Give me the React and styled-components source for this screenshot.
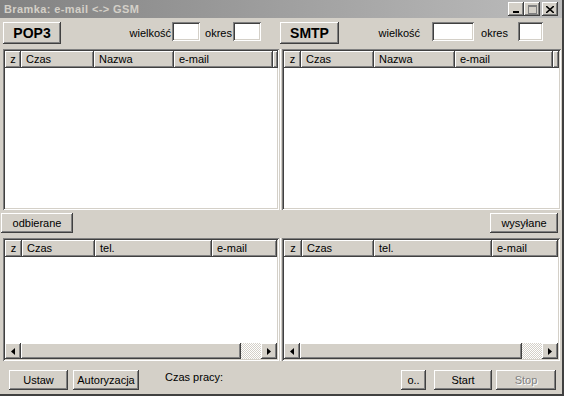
import React from 'react';
import styled, { createGlobalStyle } from 'styled-components';

const face = '#d4d0c8';
const shadow = '#808080';
const dark = '#404040';

const GlobalStyle = createGlobalStyle`
  html, body {
    margin: 0;
    padding: 0;
    background: ${face};
  }
  body {
    font-family: "Liberation Sans", Arial, sans-serif;
    font-size: 11px;
    color: #000;
  }
`;

const raised = `
  box-shadow:
    inset -1px -1px ${dark},
    inset 1px 1px #fff,
    inset -2px -2px ${shadow},
    inset 2px 2px ${face};
`;

const sunken = `
  box-shadow:
    inset 1px 1px ${shadow},
    inset -1px -1px #fff,
    inset 2px 2px ${dark},
    inset -2px -2px ${face};
`;

const Window = styled.div`
  width: 564px;
  height: 396px;
  box-sizing: border-box;
  display: flex;
  flex-direction: column;
  background: ${face};
  border-right: 2px solid ${dark};
  border-bottom: 2px solid ${dark};
  overflow: hidden;
`;

const TitleBar = styled.div`
  height: 18px;
  flex: none;
  display: flex;
  align-items: center;
  padding: 0 4px 0 4px;
  background: linear-gradient(to right, #828282, #bcbcbc);
`;

const Title = styled.div`
  flex: 1;
  font-weight: bold;
  font-size: 11px;
  letter-spacing: 0.4px;
  color: ${face};
`;

const CaptionButton = styled.div`
  width: 16px;
  height: 14px;
  box-sizing: border-box;
  background: ${face};
  ${raised}
  display: flex;
  align-items: center;
  justify-content: center;
  margin-left: ${p => p.$gap || 0}px;
`;

const Toolbar = styled.div`
  display: flex;
  height: 22px;
  margin-top: 4px;
  flex: none;
`;

const ToolbarHalf = styled.div`
  display: flex;
  align-items: center;
  width: ${p => (p.$width ? `${p.$width}px` : 'auto')};
  flex: ${p => (p.$width ? 'none' : 1)};
  box-sizing: border-box;
  padding-left: ${p => p.$padLeft}px;
  padding-right: ${p => p.$padRight}px;
`;

const Button = styled.button`
  box-sizing: border-box;
  width: ${p => p.$width}px;
  height: ${p => p.$height || 20}px;
  margin-left: ${p => p.$gap || 0}px;
  padding: 0;
  border: none;
  background: ${face};
  ${raised}
  font-family: "Liberation Sans", Arial, sans-serif;
  font-size: ${p => (p.$big ? 14 : 11)}px;
  font-weight: ${p => (p.$big ? 'bold' : 'normal')};
  color: ${p => (p.disabled ? shadow : '#000')};
  text-shadow: ${p => (p.disabled ? '1px 1px #fff' : 'none')};
  flex: none;
`;

const Label = styled.span`
  margin-left: ${p => p.$gap || 0}px;
  font-size: 11px;
  flex: none;
`;

const Spacer = styled.div`
  flex: 1;
`;

const InputBox = styled.div`
  box-sizing: border-box;
  width: ${p => p.$width}px;
  height: 19px;
  margin-left: ${p => p.$gap || 0}px;
  margin-top: -3px;
  background: #fff;
  ${sunken}
  flex: none;
`;

const Panes = styled.div`
  display: flex;
  height: ${p => p.$height}px;
  margin-top: ${p => p.$top}px;
  flex: none;
  padding-left: 3px;
`;

const Divider = styled.div`
  width: 2px;
  flex: none;
  box-sizing: border-box;
  border-right: 1px solid #fff;
  margin-right: 1px;
`;

const ListBox = styled.div`
  width: ${p => p.$width}px;
  flex: none;
  box-sizing: border-box;
  padding: 2px;
  background: #fff;
  ${sunken}
  display: flex;
  flex-direction: column;
`;

const HeaderRow = styled.div`
  display: flex;
  height: 17px;
  flex: none;
`;

const HeaderCell = styled.div`
  box-sizing: border-box;
  width: ${p => (p.$width ? `${p.$width}px` : 'auto')};
  flex: ${p => (p.$width ? 'none' : 1)};
  background: ${face};
  ${raised}
  padding-left: ${p => (p.$center ? 0 : 5)}px;
  text-align: ${p => (p.$center ? 'center' : 'left')};
  line-height: 17px;
  white-space: nowrap;
  overflow: hidden;
`;

const ListBody = styled.div`
  flex: 1;
  background: #fff;
`;

const ScrollBar = styled.div`
  display: flex;
  height: 16px;
  flex: none;
`;

const ArrowButton = styled.div`
  width: 16px;
  height: 16px;
  flex: none;
  box-sizing: border-box;
  background: ${face};
  ${raised}
  display: flex;
  align-items: center;
  justify-content: center;
`;

const Thumb = styled.div`
  flex: 1;
  background: ${face};
  ${raised}
`;

const Track = styled.div`
  width: 20px;
  flex: none;
  background: repeating-conic-gradient(#fff 0 25%, ${face} 0 50%) 0 0 / 2px 2px;
`;

const ButtonRow = styled.div`
  display: flex;
  align-items: center;
  height: 20px;
  flex: none;
  margin-top: ${p => p.$top}px;
  padding-left: ${p => p.$padLeft}px;
  padding-right: ${p => p.$padRight}px;
`;

const StatusLabel = styled.span`
  margin-left: ${p => p.$gap}px;
  align-self: flex-start;
  margin-top: 1px;
  font-size: 11px;
`;

const Arrow = ({ dir }) => (
  <svg width="4" height="7" viewBox="0 0 4 7">
    {dir === 'left' ? (
      <path d="M4 0 L0 3.5 L4 7 Z" fill="#000" />
    ) : (
      <path d="M0 0 L4 3.5 L0 7 Z" fill="#000" />
    )}
  </svg>
);

const List = ({ width, columns, scroll }) => (
  <ListBox $width={width}>
    <HeaderRow>
      {columns.map((c, i) => (
        <HeaderCell key={i} $width={c.w} $center={c.center}>
          {c.t}
        </HeaderCell>
      ))}
      {columns[columns.length - 1].w && <HeaderCell />}
    </HeaderRow>
    <ListBody />
    {scroll && (
      <ScrollBar>
        <ArrowButton>
          <Arrow dir="left" />
        </ArrowButton>
        <Thumb />
        <Track />
        <ArrowButton>
          <Arrow dir="right" />
        </ArrowButton>
      </ScrollBar>
    )}
  </ListBox>
);

const topLeft = [
  { t: 'z', w: 16, center: true },
  { t: 'Czas', w: 73 },
  { t: 'Nazwa', w: 80 },
  { t: 'e-mail', w: 99 },
];
const topRight = [
  { t: 'z', w: 17, center: true },
  { t: 'Czas', w: 73 },
  { t: 'Nazwa', w: 81 },
  { t: 'e-mail', w: 98 },
];
const bottomLeft = [
  { t: 'z', w: 17, center: true },
  { t: 'Czas', w: 73 },
  { t: 'tel.', w: 117 },
  { t: 'e-mail' },
];
const bottomRight = [
  { t: 'z', w: 18, center: true },
  { t: 'Czas', w: 72 },
  { t: 'tel.', w: 118 },
  { t: 'e-mail' },
];

export default function App() {
  return (
    <>
      <GlobalStyle />
      <Window>
        <TitleBar>
          <Title>Bramka: e-mail &lt;-&gt; GSM</Title>
          <CaptionButton>
            <svg width="8" height="8" viewBox="0 0 8 8">
              <rect x="1" y="6" width="6" height="2" fill="#000" />
            </svg>
          </CaptionButton>
          <CaptionButton>
            <svg width="9" height="9" viewBox="0 0 9 9">
              <rect x="0.5" y="0.5" width="8" height="8" fill="none" stroke={shadow} />
              <rect x="0" y="1" width="9" height="1" fill={shadow} />
            </svg>
          </CaptionButton>
          <CaptionButton $gap={2}>
            <svg width="8" height="7" viewBox="0 0 8 7">
              <path d="M0 0 L8 7 M8 0 L0 7" stroke="#000" strokeWidth="1.6" />
            </svg>
          </CaptionButton>
        </TitleBar>

        <Toolbar>
          <ToolbarHalf $width={280} $padLeft={3} $padRight={19}>
            <Button $width={58} $height={22} $big>POP3</Button>
            <Spacer />
            <Label>wielkość</Label>
            <InputBox $width={28} $gap={1} />
            <Label $gap={5}>okres</Label>
            <InputBox $width={28} $gap={1} />
          </ToolbarHalf>
          <ToolbarHalf $padLeft={0} $padRight={19}>
            <Button $width={59} $height={22} $big>SMTP</Button>
            <Spacer />
            <Label>wielkość</Label>
            <InputBox $width={42} $gap={12} />
            <Label $gap={7}>okres</Label>
            <InputBox $width={25} $gap={10} />
          </ToolbarHalf>
        </Toolbar>

        <Panes $height={161} $top={5}>
          <List width={276} columns={topLeft} />
          <Divider />
          <List width={279} columns={topRight} />
        </Panes>

        <ButtonRow $top={3} $padLeft={1} $padRight={4}>
          <Button $width={72}>odbierane</Button>
          <Spacer />
          <Button $width={68}>wysyłane</Button>
        </ButtonRow>

        <Panes $height={123} $top={5}>
          <List width={276} columns={bottomLeft} scroll />
          <Divider />
          <List width={278} columns={bottomRight} scroll />
        </Panes>

        <ButtonRow $top={9} $padLeft={9} $padRight={6}>
          <Button $width={59}>Ustaw</Button>
          <Button $width={66} $gap={5}>Autoryzacja</Button>
          <StatusLabel $gap={26}>Czas pracy:</StatusLabel>
          <Spacer />
          <Button $width={25}>o..</Button>
          <Button $width={58} $gap={8}>Start</Button>
          <Button $width={60} $gap={4} disabled>Stop</Button>
        </ButtonRow>
      </Window>
    </>
  );
}
